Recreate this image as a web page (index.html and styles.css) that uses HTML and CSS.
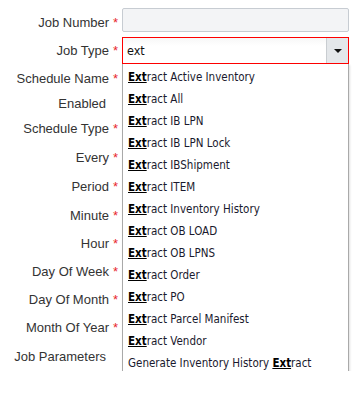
FILE: index.html
```
<!DOCTYPE html>
<html>
<head>
  <title>Job Schedule</title>
  <meta name="viewport" content="width=device-width, initial-scale=1">
  <link rel="stylesheet" href="styles.css">
</head>

<body>

  <form class="job-form">
    <label class="lbl">Job Number<span class="req">*</span></label>
    <div class="field"><input type="text" class="inp inp-disabled"></div>

    <label class="lbl">Job Type<span class="req">*</span></label>
    <div class="field combo-wrap">
      <div class="combo">
        <span class="combo-text">ext</span>
        <span class="combo-btn"><span class="caret"></span></span>
      </div>
      <ul class="dropdown">
        <li><b>Ext</b>ract Active Inventory</li>
        <li><b>Ext</b>ract All</li>
        <li><b>Ext</b>ract IB LPN</li>
        <li><b>Ext</b>ract IB LPN Lock</li>
        <li><b>Ext</b>ract IBShipment</li>
        <li><b>Ext</b>ract ITEM</li>
        <li><b>Ext</b>ract Inventory History</li>
        <li><b>Ext</b>ract OB LOAD</li>
        <li><b>Ext</b>ract OB LPNS</li>
        <li><b>Ext</b>ract Order</li>
        <li><b>Ext</b>ract PO</li>
        <li><b>Ext</b>ract Parcel Manifest</li>
        <li><b>Ext</b>ract Vendor</li>
        <li>Generate Inventory History <b>Ext</b>ract</li>
      </ul>
    </div>

    <label class="lbl">Schedule Name<span class="req">*</span></label>
    <div class="field"></div>

    <label class="lbl lbl-plain">Enabled</label>
    <div class="field"></div>

    <label class="lbl">Schedule Type<span class="req">*</span></label>
    <div class="field"></div>

    <label class="lbl">Every<span class="req">*</span></label>
    <div class="field"></div>

    <label class="lbl">Period<span class="req">*</span></label>
    <div class="field"></div>

    <label class="lbl">Minute<span class="req">*</span></label>
    <div class="field"></div>

    <label class="lbl">Hour<span class="req">*</span></label>
    <div class="field"></div>

    <label class="lbl">Day Of Week<span class="req">*</span></label>
    <div class="field"></div>

    <label class="lbl">Day Of Month<span class="req">*</span></label>
    <div class="field"></div>

    <label class="lbl">Month Of Year<span class="req">*</span></label>
    <div class="field"></div>

    <label class="lbl lbl-plain">Job Parameters</label>
    <div class="field"></div>
  </form>

</body>
</html>
```

FILE: styles.css
```
html, body {
  margin: 0;
  background: #fff;
}

body {
  font-family: "Liberation Sans", Arial, sans-serif;
  font-size: 13px;
  color: #333;
}

.job-form {
  display: grid;
  grid-template-columns: 122px 227px;
  grid-template-rows: 28px 28px 29px 21px 28px 30px 29px 28px 28px 29px 27px 29px 29px;
  padding-top: 8px;
}

.lbl {
  display: flex;
  align-items: center;
  justify-content: flex-end;
  padding-right: 3px;
  white-space: nowrap;
}

.lbl-plain {
  padding-right: 16px;
}

.req {
  color: #e8262b;
  margin-left: 4px;
  width: 6px;
  font-size: 13px;
}

.field {
  display: flex;
  align-items: center;
}

.inp {
  box-sizing: border-box;
  width: 100%;
  height: 24px;
  margin-top: -4px;
  border: 1px solid #c7ccd2;
  border-radius: 2px;
  background: #f3f4f6;
}

.combo-wrap {
  position: relative;
  align-items: flex-end;
}

.combo {
  box-sizing: border-box;
  display: flex;
  width: 100%;
  height: 27px;
  border: 1px solid #f00;
  background: linear-gradient(#f7f7f7, #fff 8px);
}

.combo-text {
  flex: 1;
  display: flex;
  align-items: center;
  padding-left: 4px;
  font-family: "DejaVu Sans Condensed", Tahoma, sans-serif;
  font-size: 12.5px;
  color: #111;
}

.combo-btn {
  width: 21px;
  display: flex;
  align-items: center;
  justify-content: center;
  background: #e4e7ea;
  border-left: 1px solid #c9cdd1;
}

.caret {
  width: 0;
  height: 0;
  border-left: 4px solid transparent;
  border-right: 4px solid transparent;
  border-top: 4px solid #111;
}

.dropdown {
  position: absolute;
  top: 100%;
  left: 0;
  right: 0;
  margin: 0;
  padding: 2px 0 0;
  list-style: none;
  background: #fff;
  border: 1px solid #a9a9a9;
  border-top: none;
  box-shadow: 1px 1px 2px rgba(0, 0, 0, 0.12);
  z-index: 2;
}

.dropdown li {
  height: 22px;
  line-height: 22px;
  padding-left: 5px;
  font-family: "DejaVu Sans Condensed", Tahoma, sans-serif;
  font-size: 11.5px;
  color: #1a1a2e;
  white-space: nowrap;
}

.dropdown b {
  color: #000;
  text-decoration: underline;
}
```
